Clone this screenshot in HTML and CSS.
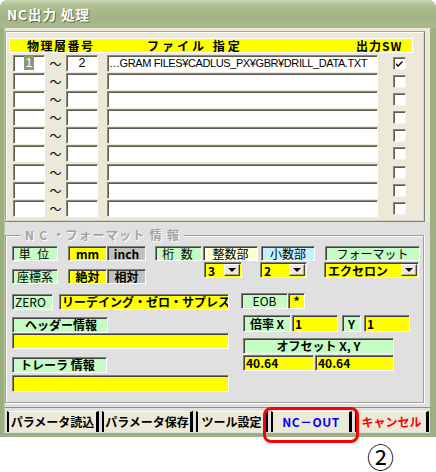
FILE: index.html
```html
<!DOCTYPE html>
<html lang="ja">
<head>
<meta charset="utf-8">
<title>NC出力 処理</title>
<link rel="stylesheet" href="styles.css">
</head>
<body>
<div class="stage">
  <div class="window">
    <div class="titlebar">NC出力 処理</div>
    <div class="client">
      <div class="upper">
        <div class="grid-panel">
          <div class="grid-head">
            <span class="h1">物理層番号</span><span class="h2">ファイル 指定</span><span class="h3">出力SW</span>
          </div>
          <div class="rows">
            <div class="row">
              <div class="tb num"><span class="sel">1</span></div><div class="tilde">～</div><div class="tb num">2</div>
              <div class="tb file">…GRAM FILES¥CADLUS_PX¥GBR¥DRILL_DATA.TXT</div>
              <div class="chk"><svg width="9" height="9" viewBox="0 0 9 9"><path d="M1 4 L3 6 L7.5 1.5 L7.5 3.5 L3 8 L1 6 Z" fill="#000"/></svg></div>
            </div>
            <div class="row"><div class="tb num"></div><div class="tilde">～</div><div class="tb num"></div><div class="tb file"></div><div class="chk"></div></div>
            <div class="row"><div class="tb num"></div><div class="tilde">～</div><div class="tb num"></div><div class="tb file"></div><div class="chk"></div></div>
            <div class="row"><div class="tb num"></div><div class="tilde">～</div><div class="tb num"></div><div class="tb file"></div><div class="chk"></div></div>
            <div class="row"><div class="tb num"></div><div class="tilde">～</div><div class="tb num"></div><div class="tb file"></div><div class="chk"></div></div>
            <div class="row"><div class="tb num"></div><div class="tilde">～</div><div class="tb num"></div><div class="tb file"></div><div class="chk"></div></div>
            <div class="row"><div class="tb num"></div><div class="tilde">～</div><div class="tb num"></div><div class="tb file"></div><div class="chk"></div></div>
            <div class="row"><div class="tb num"></div><div class="tilde">～</div><div class="tb num"></div><div class="tb file"></div><div class="chk"></div></div>
            <div class="row"><div class="tb num"></div><div class="tilde">～</div><div class="tb num"></div><div class="tb file"></div><div class="chk"></div></div>
          </div>
        </div>
      </div>
      <div class="lower">
        <div class="group">
          <div class="legend">N C ・フォーマット 情 報</div>
          <div class="row-a">
            <div class="left-block">
              <div class="line">
                <div class="box green w-unit spaced">単 位</div>
                <div class="box yellow bold w-opt opt1">mm</div>
                <div class="box gray bold w-opt">inch</div>
              </div>
              <div class="line">
                <div class="box green w-unit">座標系</div>
                <div class="box yellow bold w-opt opt1">絶対</div>
                <div class="box gray bold w-opt">相対</div>
              </div>
            </div>
            <div class="right-block">
              <div class="line">
                <div class="box green w-keta">桁 数</div>
                <div class="box cream w-int">整数部</div>
                <div class="box cyan w-dec">小数部</div>
                <div class="box green w-fmt">フォーマット</div>
              </div>
              <div class="line combos">
                <div class="combo w-c1"><span class="val">3</span><span class="dd"><i></i></span></div>
                <div class="combo w-c2"><span class="val">2</span><span class="dd"><i></i></span></div>
                <div class="combo w-c3"><span class="val">エクセロン</span><span class="dd"><i></i></span></div>
              </div>
            </div>
          </div>
          <div class="row-b">
            <div class="col-left">
              <div class="line">
                <div class="box green w-zero left">ZERO</div>
                <div class="box yellow bold w-zerov left">リーデイング・ゼロ・サプレス</div>
              </div>
              <div class="box green bold w-hdr lbl-hdr">ヘッダー情報</div>
              <div class="box yellow w-full"></div>
              <div class="box green bold w-trl lbl-trl">トレーラ 情報</div>
              <div class="box yellow w-full trl-field"></div>
            </div>
            <div class="col-right">
              <div class="line">
                <div class="box green w-eob">EOB</div>
                <div class="box yellow bold w-star">*</div>
              </div>
              <div class="line scale">
                <div class="box green bold w-bx">倍率 X</div>
                <div class="box yellow bold w-sv left">1</div>
                <div class="box green bold w-y">Y</div>
                <div class="box yellow bold w-sv left">1</div>
              </div>
              <div class="box green bold w-off">オフセット X, Y</div>
              <div class="line">
                <div class="box yellow bold w-o1 left">40.64</div>
                <div class="box yellow bold w-o2 left">40.64</div>
              </div>
            </div>
          </div>
        </div>
        <div class="btnbar">
          <div class="btn b1">パラメータ読込</div>
          <div class="btn b2">パラメータ保存</div>
          <div class="btn b3">ツール設定</div>
          <div class="btn b4 blue">NC－OUT</div>
          <div class="btn b5 red">キャンセル</div>
        </div>
      </div>
    </div>
  </div>
  <div class="mark-rect"></div>
  <div class="mark-num">②</div>
</div>
</body>
</html>
```

FILE: styles.css
```css
* { box-sizing: border-box; margin: 0; padding: 0; }
body {
  background: #fff;
  font-family: "Noto Sans CJK JP", "Noto Sans", sans-serif;
  font-size: 12px;
  color: #000;
}
.stage { position: relative; width: 436px; height: 472px; overflow: hidden; }

.window {
  width: 436px;
  height: 437px;
  background: #9DB07F;
  border-radius: 8px 8px 0 0;
  padding: 0 6px 4px 4px;
  display: flex;
  flex-direction: column;
}
.titlebar {
  height: 28px;
  margin: 0 -6px 0 -4px;
  border-radius: 8px 8px 0 0;
  background: linear-gradient(#C9D4B2 0%, #AEBF92 20%, #A2B486 60%, #A9BA8E 100%);
  color: #fff;
  font-weight: 700;
  font-size: 13.5px;
  padding-left: 7px;
  display: flex;
  align-items: center;
  text-shadow: 1px 1px 0 #5C6C42;
  letter-spacing: 1px;
}
.client {
  flex: 1;
  display: flex;
  flex-direction: column;
  background: #E0E0E0;
  border-left: 1px solid #B8C6A0;
}

/* upper grid */
.upper {
  height: 194px;
  background: #ECE9D8;
  padding: 3px 5px 0 0;
}
.grid-panel {
  height: 191px;
  border: 1px solid;
  border-color: #A9A89C #808080 #808080 #A9A89C;
  box-shadow: inset 1px 1px 0 #fff, inset -1px -1px 0 #D6D3C4;
  padding: 7px 0 0 4px;
}
.grid-head {
  width: 402px;
  height: 13px;
  background: #FFFF00;
  display: flex;
  font-weight: 700;
  line-height: 13px;
  outline: 1px solid #fff;
}
.grid-head .h1 { width: 137px; padding-left: 17px; letter-spacing: 1.5px; }
.grid-head .h2 { width: 209px; letter-spacing: 3px; }
.grid-head .h3 { letter-spacing: 1px; }

.rows {
  display: flex;
  flex-direction: column;
  gap: 1.1px;
  margin: 3px 0 0 3px;
}
.row { display: flex; height: 17px; align-items: stretch; }
.tb {
  background: #fff;
  border: 1px solid;
  border-color: #8A887C #fff #fff #8A887C;
  box-shadow: inset 1px 1px 0 #5E5C52;
  font-family: "Liberation Sans", "Noto Sans CJK JP", sans-serif;
  font-size: 12.5px;
  line-height: 15px;
}
.tb.num { width: 32px; text-align: center; }
.tilde { width: 21px; text-align: center; line-height: 17px; font-size: 12px; }
.tb.file {
  width: 271px;
  margin-left: 9px;
  padding-left: 1px;
  white-space: nowrap;
  overflow: hidden;
  font-size: 11px;
  letter-spacing: -0.4px;
}
.sel { background: #8D9A6F; color: #fff; padding: 0 2px; display: inline-block; line-height: 14px; }
.chk {
  width: 13px;
  height: 13px;
  margin-left: 15px;
  align-self: center;
  background: #fff;
  border: 1px solid;
  border-color: #8A887C #F4F3EE #F4F3EE #8A887C;
  box-shadow: inset 1px 1px 0 #5E5C52;
  display: flex;
  align-items: center;
  justify-content: center;
}

/* lower group */
.lower {
  flex: 1;
  display: flex;
  flex-direction: column;
}
.group {
  margin: 13px 0 0 0;
  width: 419px;
  height: 168px;
  border: 1px solid #A0A0A0;
  box-shadow: inset 1px 1px 0 #fff, 1px 1px 0 #fff;
  padding: 0 0 0 6px;
}
.legend {
  width: fit-content;
  margin: -8px 0 0 9px;
  padding: 0 4px;
  background: #E0E0E0;
  color: #A3A3A3;
  font-weight: 700;
  line-height: 14px;
  letter-spacing: 1.3px;
  text-shadow: 1px 1px 0 #fff;
}
.line { display: flex; }

.box {
  height: 15px;
  border: 1px solid;
  border-color: #808080 #fff #fff #808080;
  box-shadow: inset 1px 1px 0 #404040;
  text-align: center;
  line-height: 13px;
  white-space: nowrap;
  overflow: hidden;
}
.box.left { text-align: left; padding-left: 2px; }
.bold { font-weight: 700; }
.green { background: #C4FCC4; }
.yellow { background: #FFFF00; }
.gray { background: #C0C0C0; }
.cream { background: #FFFFD4; }
.cyan { background: #C2F2FF; }
.spaced { letter-spacing: 2px; }

.row-a { display: flex; margin-top: 4px; }
.left-block { display: flex; flex-direction: column; gap: 8px; }
.w-unit { width: 46px; }
.w-opt { width: 39px; }
.opt1 { margin-left: 10px; }
.right-block { display: flex; flex-direction: column; margin-left: 9px; gap: 1px; }
.w-keta { width: 47px; letter-spacing: 2px; }
.w-int { width: 55px; margin-left: 1px; }
.w-dec { width: 54px; margin-left: 3px; }
.w-fmt { width: 95px; margin-left: 10px; }
.combos { margin-left: 49px; }
.combo {
  height: 16px;
  display: flex;
  background: #FFFF00;
  border: 1px solid;
  border-color: #808080 #fff #fff #808080;
  box-shadow: inset 1px 1px 0 #404040;
  padding: 1px 1px 1px 1px;
}
.combo .val { flex: 1; font-weight: 700; line-height: 13px; padding-left: 2px; white-space: nowrap; }
.combo .dd {
  width: 16px;
  background: #ECE9D8;
  border: 1px solid;
  border-color: #fff #404040 #404040 #fff;
  box-shadow: inset -1px -1px 0 #A9A89C;
  display: flex;
  align-items: center;
  justify-content: center;
}
.combo .dd i {
  width: 0; height: 0;
  border-left: 4px solid transparent;
  border-right: 4px solid transparent;
  border-top: 4px solid #000;
}
.w-c1 { width: 38px; }
.w-c2 { width: 47px; margin-left: 18px; }
.w-c3 { width: 95px; margin-left: 17px; }

.row-b { display: flex; margin-top: 10px; }
.col-left { width: 217px; display: flex; flex-direction: column; }
.col-left .box { height: 16px; line-height: 14px; }
.w-zero { width: 41px; }
.w-zerov { width: 170px; margin-left: 6px; }
.w-hdr { width: 96px; margin-top: 7px; }
.lbl-hdr { text-align: left; padding-left: 12px; }
.w-full { width: 217px; }
.w-trl { width: 95px; margin-top: 8px; }
.lbl-trl { text-align: left; padding-left: 7px; }
.trl-field { margin-top: 2px; height: 17px !important; }

.col-right { display: flex; flex-direction: column; margin-left: 12px; margin-top: -1px; }
.col-right .box { height: 16px; line-height: 14px; }
.w-eob { width: 47px; }
.w-star { width: 17px; }
.scale { margin: 6px 0 0 2px; }
.scale .box { height: 17px; line-height: 15px; }
.w-bx { width: 48px; }
.w-sv { width: 46px; margin-left: 1px; }
.w-y { width: 19px; margin-left: 4px; }
.scale .w-y + .w-sv { margin-left: 3px; }
.w-off { width: 151px; margin: 6px 0 0 2px; }
.w-o1 { width: 71px; margin-left: 2px; margin-top: 1px; }
.w-o2 { width: 79px; margin-left: 1px; margin-top: 1px; }

/* button bar */
.btnbar {
  margin-top: auto;
  border-top: 1px solid #8E8E8E;
  padding: 3px 0 0 2px;
  height: 26px;
  display: flex;
  gap: 3px;
}
.btn {
  height: 21px;
  background: #ECE9D8;
  border-top: 1px solid #fff;
  border-left: 2px solid #000;
  border-right: 3px solid #000;
  font-weight: 700;
  line-height: 19px;
  text-align: center;
  white-space: nowrap;
}
.b1 { width: 92px; }
.b2 { width: 91px; }
.b3 { width: 72px; }
.b4 { width: 81px; letter-spacing: 0.5px; }
.b5 { width: 74px; }
.blue { color: #0000FF; }
.red { color: #FF0000; }

.mark-rect {
  position: absolute;
  left: 263px;
  top: 407px;
  width: 96px;
  height: 36px;
  border: 3px solid #FF0000;
  border-radius: 8px;
}
.mark-num {
  position: absolute;
  left: 367px;
  top: 443px;
  font-size: 27px;
  line-height: 28px;
}
```
